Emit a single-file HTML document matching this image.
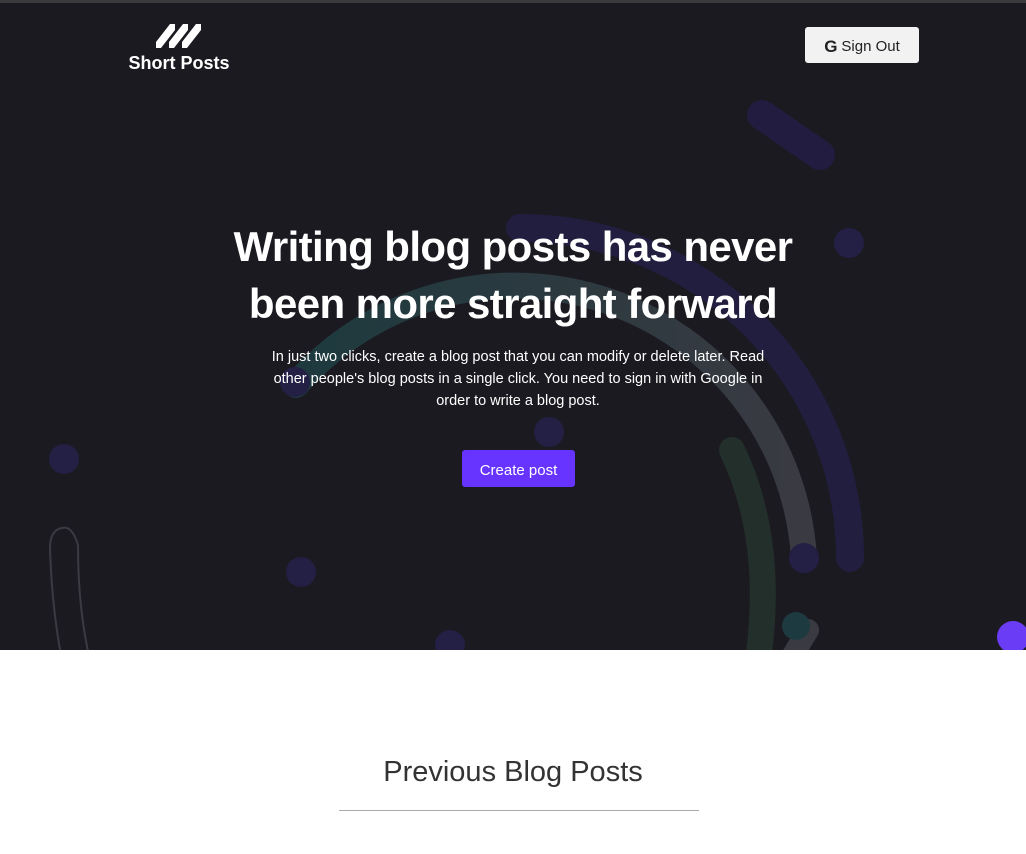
<!DOCTYPE html>
<html><head><meta charset="utf-8"><style>
*{margin:0;padding:0;box-sizing:border-box}
body{width:1026px;height:854px;overflow:hidden;background:#fff;font-family:"Liberation Sans",sans-serif}
.hero{position:relative;height:650px;background:#1b1a20;border-top:3px solid #3a3a3c;overflow:hidden}
svg.bg{position:absolute;left:0;top:-3px}
.logo{position:absolute;left:122px;top:17px;color:#fff;font-weight:bold;font-size:18px;text-align:center;width:114px}
.so{position:absolute;left:805px;top:24px;width:114px;height:36px;background:#f2f2f2;border-radius:3px;font-size:15px;color:#222;display:flex;align-items:center;justify-content:center;gap:4px;padding-top:3px}
h1{position:absolute;left:0;width:1026px;top:215px;text-align:center;color:#fff;font-size:42px;line-height:57px;font-weight:bold;letter-spacing:-0.6px}
p.d{position:absolute;left:263px;width:510px;top:343px;text-align:center;color:#fff;font-size:14.5px;line-height:22px}
.cp{position:absolute;left:462px;top:447px;width:113px;height:37px;background:#6633ff;border-radius:3px;color:#fff;font-size:15px;display:flex;align-items:center;justify-content:center;padding-top:3px}
h2{text-align:center;font-weight:normal;font-size:29px;color:#333;margin-top:106px}
hr{width:360px;margin:21px 0 0 339px;border:0;border-top:1px solid #aaa}
</style></head><body>
<div class="hero">
<svg class="bg" width="1026" height="653" viewBox="0 0 1026 653">
<defs><linearGradient id="g" x1="0" x2="1"><stop offset="0" stop-color="#1d3a3e"/><stop offset="1" stop-color="#3a3a42"/></linearGradient></defs>
<path d="M520 228 A330 330 0 0 1 850 558" stroke="#221e40" stroke-width="28" fill="none" stroke-linecap="round"/>
<path d="M296 385 A290 290 0 0 1 804 558" stroke="url(#g)" stroke-width="26" fill="none" stroke-linecap="round"/>
<path d="M732 450 Q775 540 758 660" stroke="#232f2b" stroke-width="26" fill="none" stroke-linecap="round"/>
<path d="M808 630 L790 660" stroke="#3a3a42" stroke-width="22" fill="none" stroke-linecap="round"/>
<path d="M762 115 L820 155" stroke="#221d40" stroke-width="30" stroke-linecap="round"/>
<path d="M78 545 Q72 525 62 528 Q50 530 50 548 Q52 610 62 660 M78 545 Q78 610 90 660" stroke="#3a3a42" stroke-width="2" fill="none"/>
<g fill="#231f45"><circle cx="849" cy="243" r="15"/><circle cx="295" cy="382" r="15"/><circle cx="549" cy="432" r="15"/><circle cx="64" cy="459" r="15"/><circle cx="301" cy="572" r="15"/><circle cx="804" cy="558" r="15"/><circle cx="450" cy="645" r="15"/></g>
<circle cx="796" cy="626" r="14" fill="#1d3a40"/>
<circle cx="1013" cy="637" r="16" fill="#6a3cf5"/>
</svg>
<div class="logo"><svg width="50" height="30" viewBox="0 0 50 30" style="display:block;margin:0 auto 3px"><g fill="#fff"><polygon points="2,22 16,4 21,4 21,10 7,28 2,28"/><polygon points="15,22 29,4 34,4 34,10 20,28 15,28"/><polygon points="28,22 42,4 47,4 47,10 33,28 28,28"/></g></svg>Short Posts</div>
<div class="so"><b style="font-size:17px">G</b> Sign Out</div>
<h1>Writing blog posts has never<br>been more straight forward</h1>
<p class="d">In just two clicks, create a blog post that you can modify or delete later. Read other people's blog posts in a single click. You need to sign in with Google in order to write a blog post.</p>
<div class="cp">Create post</div>
</div>
<h2>Previous Blog Posts</h2>
<hr>
</body></html>
